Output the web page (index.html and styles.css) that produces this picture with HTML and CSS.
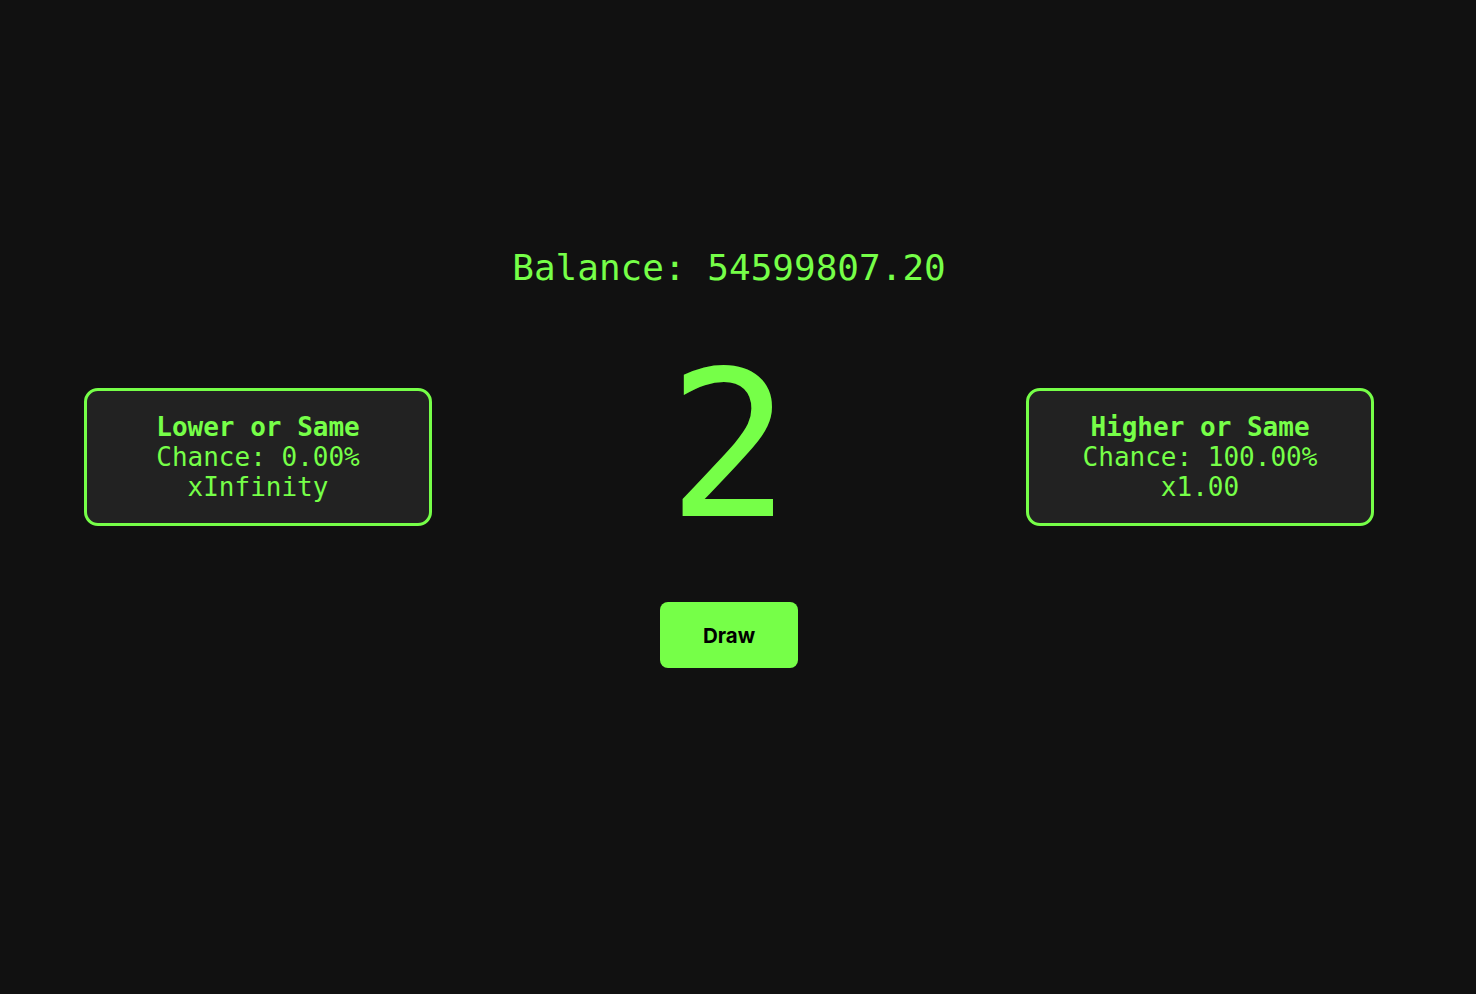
FILE: index.html
```html
<!DOCTYPE html>
<html lang="en">
<head>
<meta charset="utf-8">
<title>Higher or Lower</title>
<link rel="stylesheet" href="styles.css">
</head>
<body>
<main class="app">
  <div class="balance">Balance: 54599807.20</div>
  <div class="row">
    <div class="choice">
      <div class="choice-title">Lower or Same</div>
      <div>Chance: 0.00%</div>
      <div>xInfinity</div>
    </div>
    <div class="number">2</div>
    <div class="choice">
      <div class="choice-title">Higher or Same</div>
      <div>Chance: 100.00%</div>
      <div>x1.00</div>
    </div>
  </div>
  <button class="draw">Draw</button>
</main>
</body>
</html>
```
FILE: styles.css
```css
html, body {
  margin: 0;
  padding: 0;
  background: #111111;
}
body {
  height: 994px;
  overflow: hidden;
}
.app {
  width: 1458px;
  padding-top: 247px;
  display: flex;
  flex-direction: column;
  align-items: center;
  font-family: "DejaVu Sans Mono", monospace;
  color: #76ff48;
}
.balance {
  font-size: 36px;
  line-height: 42px;
}
.row {
  align-self: stretch;
  margin-top: 55px;
  padding: 0 84px;
  display: flex;
  justify-content: space-between;
  align-items: flex-start;
}
.choice {
  box-sizing: border-box;
  width: 348px;
  height: 138px;
  margin-top: 44px;
  padding-top: 21px;
  background: #222222;
  border: 3px solid #76ff48;
  border-radius: 14px;
  font-size: 26px;
  line-height: 30px;
  text-align: center;
}
.choice-title {
  font-weight: bold;
}
.number {
  font-size: 204px;
  line-height: 204px;
}
.draw {
  margin-top: 54px;
  width: 138px;
  height: 66px;
  padding: 0;
  border: none;
  border-radius: 8px;
  background: #76ff48;
  color: #000000;
  font-family: Inter, "Liberation Sans", sans-serif;
  font-weight: 700;
  font-size: 20.5px;
  line-height: 24px;
  padding-top: 2px;
}
```
